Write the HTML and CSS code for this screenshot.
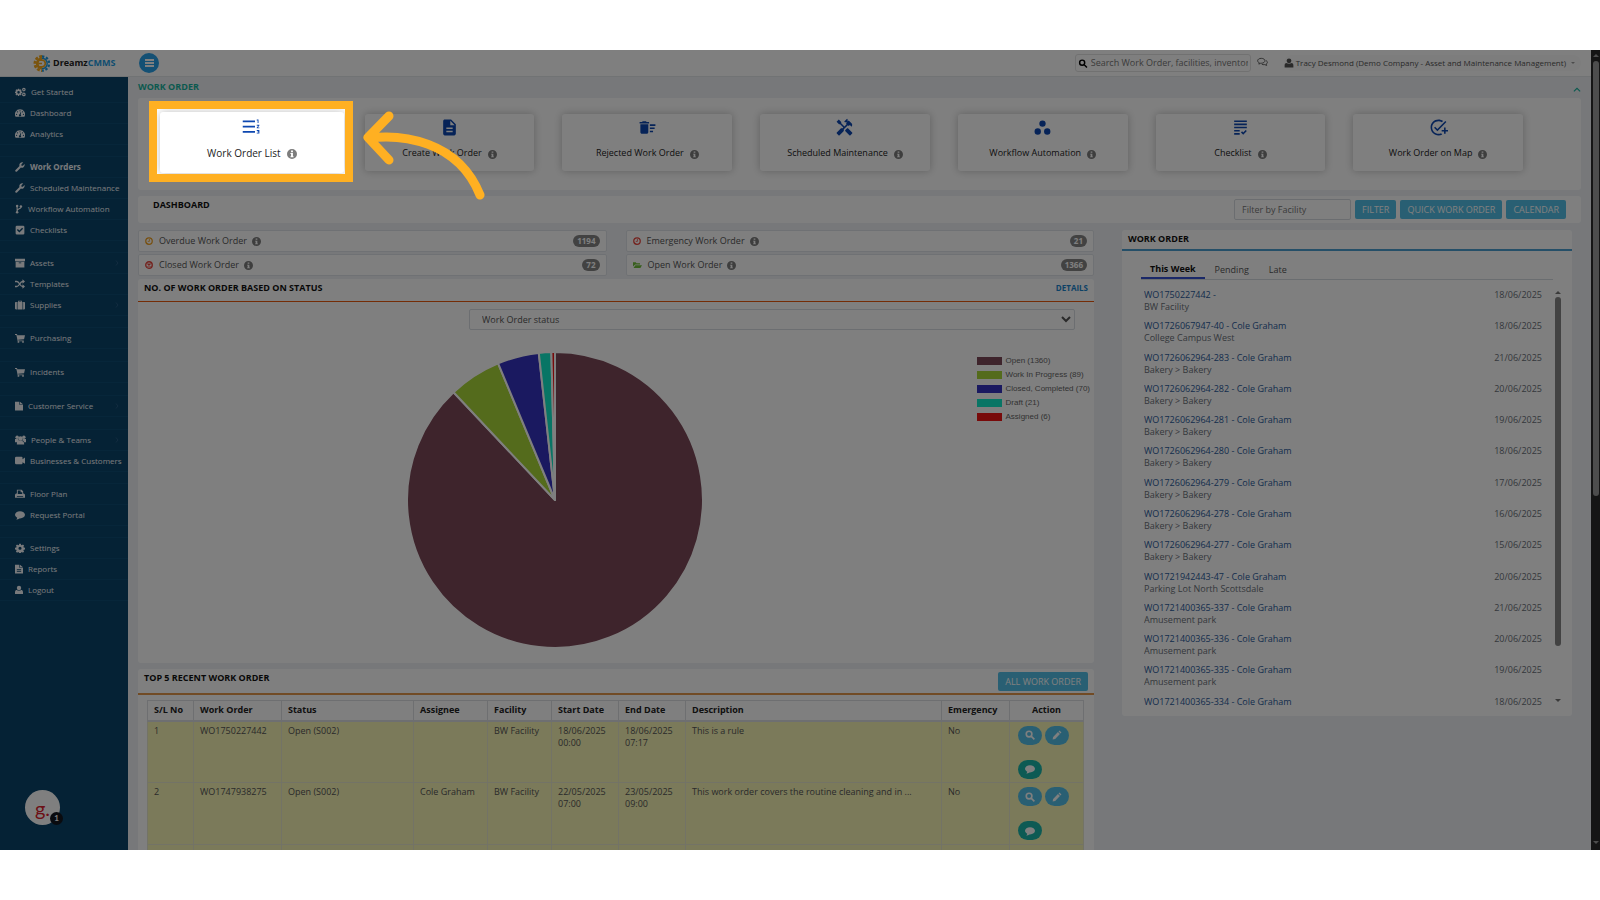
FILE: index.html
```html
<!DOCTYPE html>
<html lang="en">
<head>
    <meta charset="UTF-8">
    <meta name="viewport" content="width=device-width, initial-scale=1.0">
    <title>DreamzCMMS - Work Order</title>
    <link rel="stylesheet" href="styles.css">
</head>
<body>
    <!-- Icon sprite -->
    <svg class="sprite" xmlns="http://www.w3.org/2000/svg">
        <symbol id="i-gear" viewBox="0 0 16 16"><path fill-rule="evenodd" d="M6.7 1h2.6l.4 2 1.3.6 1.7-1.2 1.9 1.9-1.2 1.7.6 1.3 2 .4v2.6l-2 .4-.6 1.3 1.2 1.7-1.9 1.9-1.7-1.2-1.3.6-.4 2H6.7l-.4-2-1.3-.6-1.7 1.2-1.9-1.9 1.2-1.7-.6-1.3-2-.4V7.700l2-.4.6-1.300-1.200-1.700 1.900-1.900L5 3.600 6.300 3zM8 5.800a2.500 2.500 0 1 0 0 5 2.500 2.500 0 0 0 0-5z"/></symbol>
        <symbol id="i-cogs" viewBox="0 0 18 16"><path fill-rule="evenodd" d="M4.800 2.500h2l.3 1.600 1 .4 1.300-.9 1.400 1.400-.9 1.300.4 1 1.600.3v2l-1.600.3-.4 1 .9 1.300-1.400 1.400-1.300-.9-1 .4-.3 1.600h-2l-.3-1.600-1-.4-1.300.9L.8 12.200l.9-1.300-.4-1L0 9.600v-2l1.300-.3.4-1L.8 5l1.400-1.400 1.300.9 1-.4zM5.800 6.500a2.100 2.100 0 1 0 0 4.200 2.100 2.100 0 0 0 0-4.200z"/><path fill-rule="evenodd" d="M14.500 1a3 3 0 1 1 0 6 3 3 0 0 1 0-6zm0 2a1 1 0 1 0 0 2 1 1 0 0 0 0-2zM14.500 9a3 3 0 1 1 0 6 3 3 0 0 1 0-6zm0 2a1 1 0 1 0 0 2 1 1 0 0 0 0-2z"/></symbol>
        <symbol id="i-dash" viewBox="0 0 16 16"><path fill-rule="evenodd" d="M8 2a8 8 0 0 1 7 12H1A8 8 0 0 1 8 2zM8 3.500a1 1 0 1 0 0 2 1 1 0 0 0 0-2zM4 5a1 1 0 1 0 0 2 1 1 0 0 0 0-2zM2.500 9a1 1 0 1 0 0 2 1 1 0 0 0 0-2zm11 0a1 1 0 1 0 0 2 1 1 0 0 0 0-2zM12 5a1 1 0 1 0 0 2 1 1 0 0 0 0-2zM9 6.500L7.700 10a1.700 1.700 0 1 0 1.300.3L10 7z"/></symbol>
        <symbol id="i-wrench" viewBox="0 0 16 16"><path d="M15.500 4.500a4.500 4.500 0 0 1-6 4.300l-6.300 6.300a1.600 1.600 0 0 1-2.300-2.300l6.300-6.300a4.500 4.500 0 0 1 6-5.700L10.300 3.500v2.300h2.300l2.700-2.600c.1.400.2.800.2 1.300z"/></symbol>
        <symbol id="i-fork" viewBox="0 0 12 16"><path fill="none" stroke="currentColor" stroke-width="1.800" d="M3 4v8M9 5c0 3-6 2.500-6 6"/><circle cx="3" cy="3" r="2"/><circle cx="3" cy="13" r="2"/><circle cx="9" cy="4" r="2"/></symbol>
        <symbol id="i-check" viewBox="0 0 16 16"><path fill-rule="evenodd" d="M3 1h10a2 2 0 0 1 2 2v10a2 2 0 0 1-2 2H3a2 2 0 0 1-2-2V3a2 2 0 0 1 2-2zm0 7l4 4 6-6-1.600-1.600L7 8.800 4.600 6.400z"/></symbol>
        <symbol id="i-archive" viewBox="0 0 16 16"><path fill-rule="evenodd" d="M0 1h16v4H0zM1 6h14v9H1zm5 1v1.500h4V7z"/></symbol>
        <symbol id="i-random" viewBox="0 0 16 16"><path fill="none" stroke="currentColor" stroke-width="2.200" d="M0 4h3c4 0 5 8 9 8h1M0 12h3c4 0 5-8 9-8h1"/><path d="M12 .5L16 4l-4 3.500zM12 8.500l4 3.500-4 3.500z"/></symbol>
        <symbol id="i-case" viewBox="0 0 16 16"><path fill-rule="evenodd" d="M5 3V1h6v2h1v12H4V3zm1.300-.8V3h3.400v-.8zM0 4.500C0 3.500.8 3 1.500 3H3v12H1.500C.8 15 0 14.300 0 13.500zM13 3h1.500c.8 0 1.500.7 1.500 1.500v9c0 .8-.7 1.500-1.500 1.500H13z"/></symbol>
        <symbol id="i-cart" viewBox="0 0 16 16"><path d="M0 1.500h3.200l.5 2H16l-1.500 6.300-9.300 1 .3 1H14v1.500H4.300L2.200 3H0z"/><circle cx="5.500" cy="14.200" r="1.500"/><circle cx="12.800" cy="14.200" r="1.500"/></symbol>
        <symbol id="i-file" viewBox="0 0 13 16"><path d="M0 1h7v5h6v9.500H0zM8 1l5 4H8z"/></symbol>
        <symbol id="i-report" viewBox="0 0 13 16"><path fill-rule="evenodd" d="M0 1h7v5h6v9.500H0zM8 1l5 4H8zM3 8v1.300h7V8zm0 3v1.300h7V11z"/></symbol>
        <symbol id="i-users" viewBox="0 0 18 16"><circle cx="3.500" cy="3.500" r="2.800"/><circle cx="14.500" cy="3.500" r="2.800"/><circle cx="9" cy="5.500" r="3.600"/><path d="M0 6.500h5.500c0 2 .5 2 1 2.500L4 11.500H0zM18 6.500h-5.500c0 2-.5 2-1 2.500l2.500 2.500h4zM3 15.500c0-4.500 1-6.500 2.500-6.500h7c1.500 0 2.500 2 2.500 6.500z"/></symbol>
        <symbol id="i-video" viewBox="0 0 16 16"><path d="M2 1h8.500a1.500 1.500 0 0 1 1.500 1.500V5l4-2.500v10L12 10v1.500a1.500 1.500 0 0 1-1.500 1.500H2a2 2 0 0 1-2-2V3a2 2 0 0 1 2-2z"/></symbol>
        <symbol id="i-print" viewBox="0 0 16 16"><path fill-rule="evenodd" d="M3 1h7.500L13 3.500V7c1.500 0 3 .8 3 2.500V14H0V9.500C0 8 1 7 3 7zm1.500 1.500V8h7V5H9V2.500zM3 11v1.500h10V11z"/></symbol>
        <symbol id="i-comment" viewBox="0 0 16 16"><path d="M8 2c4.400 0 8 2.500 8 5.700s-3.600 5.700-8 5.700h-1C5.500 14.600 4 15 2 15.200c1-1 1.300-2 1.500-3C1.300 11.200 0 9.600 0 7.700 0 4.500 3.600 2 8 2z"/></symbol>
        <symbol id="i-comments" viewBox="0 0 18 16"><path fill="none" stroke="currentColor" stroke-width="1.500" d="M7 2c3.500 0 6 1.800 6 4s-2.500 4-6 4H6l-3 1.500.8-2.200C2 8.500 1 7.500 1 6c0-2.200 2.500-4 6-4z"/><path fill="none" stroke="currentColor" stroke-width="1.500" d="M14.500 5.500c1.500.7 2.500 1.800 2.500 3.200 0 1.200-.7 2.200-2 2.800l.8 2.200-3-1.400c-2 .3-3.800 0-5-.7"/></symbol>
        <symbol id="i-user" viewBox="0 0 14 16"><circle cx="7" cy="4.500" r="3.800"/><path d="M0 15V12c0-3 1.500-4 3-4 2 1.700 6 1.700 8 0 1.500 0 3 1 3 4v3z"/></symbol>
        <symbol id="i-search" viewBox="0 0 16 16"><path fill="none" stroke="currentColor" stroke-width="2.600" d="M11 6.500a4.500 4.500 0 1 1-9 0 4.500 4.500 0 0 1 9 0zM9.800 9.800L15 15"/></symbol>
        <symbol id="i-pencil" viewBox="0 0 16 16"><path d="M1 15l.8-4L9.500 3.300l3.200 3.200L5 14.200zM10.500 2.300L12 .9l3.100 3.200-1.400 1.400z"/></symbol>
        <symbol id="i-info" viewBox="0 0 16 16"><path fill-rule="evenodd" d="M8 0a8 8 0 1 1 0 16A8 8 0 0 1 8 0zM6.500 2.500V5h3V2.500zM5.500 6.500V8h1v3.500h-1V13h5v-1.500h-1v-5z"/></symbol>
        <symbol id="i-clock" viewBox="0 0 16 16"><circle cx="8" cy="8" r="6.500" fill="none" stroke="currentColor" stroke-width="2.500"/><path fill="none" stroke="currentColor" stroke-width="1.600" d="M8.800 4v4.800H5.500"/></symbol>
        <symbol id="i-times" viewBox="0 0 16 16"><circle cx="8" cy="8" r="6.500" fill="none" stroke="currentColor" stroke-width="2.800"/><path fill="none" stroke="currentColor" stroke-width="2.600" d="M5 5l6 6M11 5l-6 6"/></symbol>
        <symbol id="i-folder" viewBox="0 0 18 16"><path d="M0 11V2.500h5.500l1.500 2h7V7H4.500zM4.800 8.300H18L14.800 14H1z"/></symbol>
        <symbol id="i-list" viewBox="0 0 24 24"><path d="M18 17h2v.5h-1v1h1v.5h-2v1h3v-4h-3v1zm1-9h1V4h-2v1h1v3zm-1 3h1.800L18 13.100v.9h3v-1h-1.800l1.800-2.100V10h-3v1zM2 5h14v2H2V5zm0 14h14v-2H2v2zm0-6h14v-2H2v2z"/></symbol>
        <symbol id="i-doc" viewBox="0 0 24 24"><path d="M14 2H6c-1.100 0-1.990.9-1.990 2L4 20c0 1.100.89 2 1.990 2H18c1.100 0 2-.9 2-2V8l-6-6zm2 16H8v-2h8v2zm0-4H8v-2h8v2zm-3-5V3.500L18.500 9H13z"/></symbol>
        <symbol id="i-sweep" viewBox="0 0 24 24"><path d="M15 16h4v2h-4zm0-8h7v2h-7zm0 4h6v2h-6zM3 18c0 1.100.9 2 2 2h6c1.100 0 2-.9 2-2V8H3v10zM14 5h-3l-1-1H6L5 5H2v2h12z"/></symbol>
        <symbol id="i-tools" viewBox="0 0 24 24"><path d="M21.670 18.170l-5.300-5.300h-.99l-2.540 2.540v.99l5.300 5.300c.39.39 1.020.39 1.410 0l2.120-2.120c.39-.38.39-1.020 0-1.410z"/><path d="M17.340 10.190l1.410-1.410 2.120 2.120c1.170-1.170 1.170-3.070 0-4.240l-3.540-3.540-1.410 1.410V1.710l-.7-.71-3.540 3.540.71.71h2.830l-1.410 1.410 1.060 1.060-2.890 2.890-4.130-4.130V5.060L4.830 2.040 2 4.870 5.030 7.900h1.410l4.130 4.130-.85.85H7.600l-5.300 5.300c-.39.39-.39 1.020 0 1.410l2.120 2.120c.39.39 1.020.39 1.410 0l5.300-5.300v-2.120l5.150-5.150 1.060 1.050z"/></symbol>
        <symbol id="i-dots" viewBox="0 0 24 24"><circle cx="12" cy="7" r="4"/><circle cx="6" cy="17" r="4"/><circle cx="18" cy="17" r="4"/></symbol>
        <symbol id="i-grading" viewBox="0 0 24 24"><path d="M4 7h16v2H4V7zm0 6h16v-2H4v2zm0 4h7v-2H4v2zm0 4h7v-2H4v2zm11.410-2.830L14 16.750l-1.410 1.410L15.410 21 20 16.420 18.580 15l-3.170 3.170zM4 3v2h16V3H4z"/></symbol>
        <symbol id="i-task" viewBox="0 0 24 24"><path d="M22 5.180L10.590 16.600l-4.240-4.240 1.410-1.410 2.830 2.830 10-10L22 5.180zM12 20c-4.410 0-8-3.590-8-8s3.590-8 8-8c1.570 0 3.040.46 4.280 1.250l1.450-1.450C16.100 2.670 14.130 2 12 2 6.480 2 2 6.480 2 12s4.480 10 10 10c1.730 0 3.360-.44 4.780-1.220l-1.500-1.500c-1 .46-2.110.72-3.280.72zm7-5h-3v2h3v3h2v-3h3v-2h-3v-3h-2v3z"/></symbol>
        <symbol id="i-right" viewBox="0 0 8 12"><path fill="none" stroke="currentColor" stroke-width="1.500" d="M2 1l4 5-4 5"/></symbol>
        <symbol id="i-up" viewBox="0 0 12 8"><path fill="none" stroke="currentColor" stroke-width="1.800" d="M1 7l5-5 5 5"/></symbol>
    </svg>

    <div class="app">
        <!-- Top bar -->
        <header class="topbar">
            <a class="brand" href="#">
                <svg class="brand-gear" viewBox="0 0 18 18">
                    <path fill="none" stroke="#1e9be0" stroke-width="2.500" stroke-dasharray="2.500 1.800" d="M9 1.500a7.500 7.500 0 0 1 0 15"/>
                    <path fill="none" stroke="#1e9be0" stroke-width="1.500" d="M9 3.500a5.500 5.500 0 0 1 0 11"/>
                    <path fill="none" stroke="#f5a81c" stroke-width="3" stroke-dasharray="3 1.500" d="M9 1.500a7.500 7.500 0 0 0 0 15"/>
                    <path fill="none" stroke="#f5a81c" stroke-width="3" d="M9 4a5 5 0 0 0 0 10"/>
                    <path fill="none" stroke="#f5a81c" stroke-width="1.800" d="M6.500 5.500h2.500a3.500 3.500 0 0 1 0 7H6.500M5 9h4"/>
                </svg>
                <span class="brand-name">Dreamz<span class="brand-blue">CMMS</span></span>
            </a>
            <button type="button" class="menu-toggle" aria-label="Toggle menu"><span></span><span></span><span></span></button>
            <div class="topbar-right">
                <label class="search">
                    <svg class="ico"><use href="#i-search"/></svg>
                    <input type="text" aria-label="Search" placeholder="Search Work Order, facilities, inventory">
                </label>
                <a href="#" class="chat-link" aria-label="Messages"><svg class="ico wide"><use href="#i-comments"/></svg></a>
                <button type="button" class="user-menu">
                    <svg class="ico"><use href="#i-user"/></svg>
                    <span>Tracy Desmond (Demo Company - Asset and Maintenance Management)</span>
                    <i class="caret"></i>
                </button>
            </div>
        </header>

        <div class="body">
            <!-- Sidebar -->
            <nav class="sidebar">
                <ul class="nav-group">
                    <li><a href="#"><svg class="ico wide"><use href="#i-cogs"/></svg>Get Started</a></li>
                    <li><a href="#"><svg class="ico"><use href="#i-dash"/></svg>Dashboard</a></li>
                    <li><a href="#"><svg class="ico"><use href="#i-dash"/></svg>Analytics</a></li>
                </ul>
                <ul class="nav-group">
                    <li><a href="#" class="active"><svg class="ico"><use href="#i-wrench"/></svg>Work Orders</a></li>
                    <li><a href="#"><svg class="ico"><use href="#i-wrench"/></svg>Scheduled Maintenance</a></li>
                    <li><a href="#"><svg class="ico slim"><use href="#i-fork"/></svg>Workflow Automation</a></li>
                    <li><a href="#"><svg class="ico"><use href="#i-check"/></svg>Checklists</a></li>
                </ul>
                <ul class="nav-group">
                    <li><a href="#"><svg class="ico"><use href="#i-archive"/></svg>Assets<svg class="more"><use href="#i-right"/></svg></a></li>
                    <li><a href="#"><svg class="ico"><use href="#i-random"/></svg>Templates</a></li>
                    <li><a href="#"><svg class="ico"><use href="#i-case"/></svg>Supplies<svg class="more"><use href="#i-right"/></svg></a></li>
                </ul>
                <ul class="nav-group single">
                    <li><a href="#"><svg class="ico"><use href="#i-cart"/></svg>Purchasing</a></li>
                </ul>
                <ul class="nav-group single">
                    <li><a href="#"><svg class="ico"><use href="#i-cart"/></svg>Incidents</a></li>
                </ul>
                <ul class="nav-group single">
                    <li><a href="#"><svg class="ico slim"><use href="#i-file"/></svg>Customer Service<svg class="more"><use href="#i-right"/></svg></a></li>
                </ul>
                <ul class="nav-group">
                    <li><a href="#"><svg class="ico wide"><use href="#i-users"/></svg>People &amp; Teams<svg class="more"><use href="#i-right"/></svg></a></li>
                    <li><a href="#"><svg class="ico"><use href="#i-video"/></svg>Businesses &amp; Customers</a></li>
                </ul>
                <ul class="nav-group">
                    <li><a href="#"><svg class="ico"><use href="#i-print"/></svg>Floor Plan</a></li>
                    <li><a href="#"><svg class="ico"><use href="#i-comment"/></svg>Request Portal</a></li>
                </ul>
                <ul class="nav-group">
                    <li><a href="#"><svg class="ico"><use href="#i-gear"/></svg>Settings</a></li>
                    <li><a href="#"><svg class="ico slim"><use href="#i-report"/></svg>Reports</a></li>
                    <li><a href="#"><svg class="ico slim"><use href="#i-user"/></svg>Logout</a></li>
                </ul>
                <button type="button" class="help-widget">g.<span class="help-count">1</span></button>
            </nav>

            <main class="content">
                <div class="page-head">
                    <h1>WORK ORDER</h1>
                    <svg class="collapse"><use href="#i-up"/></svg>
                </div>

                <!-- Shortcut cards -->
                <section class="panel shortcuts">
                    <div class="slot">
                        <a href="#" class="card focus">
                            <svg class="card-ico"><use href="#i-list"/></svg>
                            <span class="card-label">Work Order List <svg class="info"><use href="#i-info"/></svg></span>
                            <span class="spotlight"></span>
                            <svg class="pointer" viewBox="0 0 124 92"><path d="M26 5L5 26.500 26 49M6 27C38 23 95 29 117 84"/></svg>
                        </a>
                    </div>
                    <div class="slot"><a href="#" class="card"><svg class="card-ico"><use href="#i-doc"/></svg><span class="card-label">Create Work Order <svg class="info"><use href="#i-info"/></svg></span></a></div>
                    <div class="slot"><a href="#" class="card"><svg class="card-ico"><use href="#i-sweep"/></svg><span class="card-label">Rejected Work Order <svg class="info"><use href="#i-info"/></svg></span></a></div>
                    <div class="slot"><a href="#" class="card"><svg class="card-ico"><use href="#i-tools"/></svg><span class="card-label">Scheduled Maintenance <svg class="info"><use href="#i-info"/></svg></span></a></div>
                    <div class="slot"><a href="#" class="card"><svg class="card-ico"><use href="#i-dots"/></svg><span class="card-label">Workflow Automation <svg class="info"><use href="#i-info"/></svg></span></a></div>
                    <div class="slot"><a href="#" class="card"><svg class="card-ico"><use href="#i-grading"/></svg><span class="card-label">Checklist <svg class="info"><use href="#i-info"/></svg></span></a></div>
                    <div class="slot"><a href="#" class="card"><svg class="card-ico"><use href="#i-task"/></svg><span class="card-label">Work Order on Map <svg class="info"><use href="#i-info"/></svg></span></a></div>
                </section>

                <!-- Dashboard filter bar -->
                <section class="panel filterbar">
                    <h2>DASHBOARD</h2>
                    <form class="filter-form">
                        <input type="text" aria-label="Filter by Facility" placeholder="Filter by Facility">
                        <button type="button" class="btn">FILTER</button>
                        <button type="button" class="btn">QUICK WORK ORDER</button>
                        <button type="button" class="btn">CALENDAR</button>
                    </form>
                </section>

                <div class="columns">
                    <div class="col-left">
                        <div class="stats">
                            <a href="#" class="stat"><svg class="ico amber"><use href="#i-clock"/></svg>Overdue Work Order <svg class="info"><use href="#i-info"/></svg><span class="badge">1194</span></a>
                            <a href="#" class="stat"><svg class="ico red"><use href="#i-clock"/></svg>Emergency Work Order <svg class="info"><use href="#i-info"/></svg><span class="badge">21</span></a>
                            <a href="#" class="stat"><svg class="ico red"><use href="#i-times"/></svg>Closed Work Order <svg class="info"><use href="#i-info"/></svg><span class="badge">72</span></a>
                            <a href="#" class="stat"><svg class="ico wide green"><use href="#i-folder"/></svg>Open Work Order <svg class="info"><use href="#i-info"/></svg><span class="badge">1366</span></a>
                        </div>

                        <!-- Status chart -->
                        <section class="panel chart-panel">
                            <div class="panel-head orange">
                                <h2>NO. OF WORK ORDER BASED ON STATUS</h2>
                                <a href="#" class="details">DETAILS</a>
                            </div>
                            <select class="chart-select" aria-label="Chart type">
                                <option>Work Order status</option>
                            </select>
                            <div class="chart">
                                <svg class="pie" viewBox="0 0 300 300">
                                    <g stroke="#fff" stroke-width="2" stroke-linejoin="round">
                                        <path fill="#7c4858" d="M150 150V3A147 147 0 1 1 49.200 43z"/>
                                        <path fill="#a8d638" d="M150 150L49.200 43A147 147 0 0 1 93.500 14.300z"/>
                                        <path fill="#3432c0" d="M150 150L93.500 14.300A147 147 0 0 1 133.900 3.900z"/>
                                        <path fill="#10eacb" d="M150 150L133.900 3.900A147 147 0 0 1 146.400 3z"/>
                                        <path fill="#f01414" d="M150 150L146.400 3A147 147 0 0 1 150 3z"/>
                                    </g>
                                </svg>
                                <ul class="legend">
                                    <li><i class="sw-open"></i>Open (1360)</li>
                                    <li><i class="sw-progress"></i>Work In Progress (89)</li>
                                    <li><i class="sw-closed"></i>Closed, Completed (70)</li>
                                    <li><i class="sw-draft"></i>Draft (21)</li>
                                    <li><i class="sw-assigned"></i>Assigned (6)</li>
                                </ul>
                            </div>
                        </section>

                        <!-- Recent work orders -->
                        <section class="panel recent">
                            <div class="panel-head amber-line">
                                <h2>TOP 5 RECENT WORK ORDER</h2>
                                <button type="button" class="btn">ALL WORK ORDER</button>
                            </div>
                            <table>
                                <colgroup>
                                    <col class="c-no"><col class="c-wo"><col class="c-status"><col class="c-assignee"><col class="c-facility"><col class="c-date"><col class="c-date"><col class="c-desc"><col class="c-emerg"><col class="c-action">
                                </colgroup>
                                <thead>
                                    <tr><th>S/L No</th><th>Work Order</th><th>Status</th><th>Assignee</th><th>Facility</th><th>Start Date</th><th>End Date</th><th>Description</th><th>Emergency</th><th class="center">Action</th></tr>
                                </thead>
                                <tbody>
                                    <tr>
                                        <td>1</td><td>WO1750227442</td><td>Open (S002)</td><td></td><td>BW Facility</td><td>18/06/2025 00:00</td><td>18/06/2025 07:17</td><td>This is a rule</td><td>No</td>
                                        <td><div class="actions">
                                            <button type="button" aria-label="View"><svg class="ico"><use href="#i-search"/></svg></button>
                                            <button type="button" aria-label="Edit"><svg class="ico"><use href="#i-pencil"/></svg></button>
                                            <button type="button" class="teal" aria-label="Comment"><svg class="ico"><use href="#i-comment"/></svg></button>
                                        </div></td>
                                    </tr>
                                    <tr>
                                        <td>2</td><td>WO1747938275</td><td>Open (S002)</td><td>Cole Graham</td><td>BW Facility</td><td>22/05/2025 07:00</td><td>23/05/2025 09:00</td><td>This work order covers the routine cleaning and in ...</td><td>No</td>
                                        <td><div class="actions">
                                            <button type="button" aria-label="View"><svg class="ico"><use href="#i-search"/></svg></button>
                                            <button type="button" aria-label="Edit"><svg class="ico"><use href="#i-pencil"/></svg></button>
                                            <button type="button" class="teal" aria-label="Comment"><svg class="ico"><use href="#i-comment"/></svg></button>
                                        </div></td>
                                    </tr>
                                    <tr><td></td><td></td><td></td><td></td><td></td><td></td><td></td><td></td><td></td><td></td></tr>
                                </tbody>
                            </table>
                        </section>
                    </div>

                    <!-- Work order list -->
                    <section class="panel col-right">
                        <div class="panel-head blue">
                            <h2>WORK ORDER</h2>
                        </div>
                        <div class="tabs">
                            <button type="button" class="tab on">This Week</button>
                            <button type="button" class="tab">Pending</button>
                            <button type="button" class="tab">Late</button>
                        </div>
                        <div class="list-wrap">
                            <ul class="wo-list">
                                <li><a href="#">WO1750227442 -</a><time>18/06/2025</time><span>BW Facility</span></li>
                                <li><a href="#">WO1726067947-40 - Cole Graham</a><time>18/06/2025</time><span>College Campus West</span></li>
                                <li><a href="#">WO1726062964-283 - Cole Graham</a><time>21/06/2025</time><span>Bakery &gt; Bakery</span></li>
                                <li><a href="#">WO1726062964-282 - Cole Graham</a><time>20/06/2025</time><span>Bakery &gt; Bakery</span></li>
                                <li><a href="#">WO1726062964-281 - Cole Graham</a><time>19/06/2025</time><span>Bakery &gt; Bakery</span></li>
                                <li><a href="#">WO1726062964-280 - Cole Graham</a><time>18/06/2025</time><span>Bakery &gt; Bakery</span></li>
                                <li><a href="#">WO1726062964-279 - Cole Graham</a><time>17/06/2025</time><span>Bakery &gt; Bakery</span></li>
                                <li><a href="#">WO1726062964-278 - Cole Graham</a><time>16/06/2025</time><span>Bakery &gt; Bakery</span></li>
                                <li><a href="#">WO1726062964-277 - Cole Graham</a><time>15/06/2025</time><span>Bakery &gt; Bakery</span></li>
                                <li><a href="#">WO1721942443-47 - Cole Graham</a><time>20/06/2025</time><span>Parking Lot North Scottsdale</span></li>
                                <li><a href="#">WO1721400365-337 - Cole Graham</a><time>21/06/2025</time><span>Amusement park</span></li>
                                <li><a href="#">WO1721400365-336 - Cole Graham</a><time>20/06/2025</time><span>Amusement park</span></li>
                                <li><a href="#">WO1721400365-335 - Cole Graham</a><time>19/06/2025</time><span>Amusement park</span></li>
                                <li><a href="#">WO1721400365-334 - Cole Graham</a><time>18/06/2025</time></li>
                            </ul>
                            <div class="scroll list-scroll"><i class="arrow up"></i><i class="thumb"></i><i class="arrow down"></i></div>
                        </div>
                    </section>
                </div>
            </main>
        </div>
        <div class="scroll page-scroll"><i class="arrow up"></i><i class="thumb"></i><i class="arrow down"></i></div>
    </div>
</body>
</html>
```
FILE: styles.css
```css
* {
    box-sizing: border-box;
}

body {
    margin: 0;
    padding: 50px 0;
    height: 100vh;
    background: #fff;
    font-family: "Open Sans", "Noto Sans", sans-serif;
    font-size: 9px;
    line-height: 12px;
    color: #555;
}

h1, h2, ul {
    margin: 0;
    padding: 0;
    list-style: none;
}

h1, h2 {
    font-size: 9px;
    font-weight: 700;
    color: #111;
}

a {
    color: inherit;
    text-decoration: none;
}

button, input, select {
    font: inherit;
    color: inherit;
}

button {
    border: 0;
    padding: 0;
    cursor: pointer;
}

svg {
    fill: currentColor;
    flex: none;
}

.sprite {
    display: none;
}

.ico {
    width: 10px;
    height: 10px;
}

.ico.wide {
    width: 11px;
}

.ico.slim {
    width: 8px;
}

.info {
    width: 9px;
    height: 9px;
    color: #7d7d7d;
}

/* App frame */
.app {
    position: relative;
    height: 100%;
    overflow: hidden;
    display: grid;
    grid-template-columns: 1fr 9px;
    grid-template-rows: 27px minmax(0, 1fr);
    background: #eef1f5;
}

/* Top bar */
.topbar {
    display: flex;
    align-items: center;
    background: #fff;
    border-bottom: 1px solid #e3e6e9;
    padding-right: 10px;
}

.brand {
    display: flex;
    align-items: center;
    gap: 2px;
    width: 139px;
    padding-left: 33px;
}

.brand-gear {
    width: 18px;
    height: 17px;
}

.brand-name {
    font-size: 9px;
    font-weight: 700;
    color: #222;
}

.brand-blue {
    color: #1e9be0;
}

.menu-toggle {
    display: flex;
    flex-direction: column;
    align-items: center;
    justify-content: center;
    gap: 1px;
    width: 20px;
    height: 20px;
    border-radius: 50%;
    background: #28a0e8;
}

.menu-toggle span {
    width: 9px;
    height: 2px;
    background: #fff;
}

.topbar-right {
    display: flex;
    align-items: center;
    margin-left: auto;
}

.search {
    display: flex;
    align-items: center;
    gap: 3px;
    width: 176px;
    height: 18px;
    padding: 0 2px;
    border: 1px solid #e2e2e2;
    border-radius: 3px;
    color: #000;
}

.search .ico {
    height: 9px;
}

.search input {
    flex: 1;
    min-width: 0;
    padding: 0;
    border: 0;
    outline: 0;
    background: none;
}

::placeholder {
    color: #777;
    opacity: 1;
}

.chat-link {
    margin: 0 16px 0 6px;
    height: 13px;
}

.user-menu {
    display: flex;
    align-items: center;
    gap: 2px;
    height: 16px;
    padding: 0 6px 0 0;
    border-radius: 8px;
    background: #fafafa;
    font-size: 8px;
}

.caret {
    margin-left: 3px;
    border: 2px solid transparent;
    border-top-color: #999;
    border-bottom: 0;
}

/* Scroll bars */
.scroll {
    display: flex;
    flex-direction: column;
    align-items: center;
}

.arrow {
    border: 3px solid transparent;
}

.arrow.up {
    border-top: 0;
    border-bottom-color: currentColor;
}

.arrow.down {
    margin-top: auto;
    border-bottom: 0;
    border-top-color: currentColor;
}

.page-scroll {
    grid-column: 2;
    grid-row: 1 / 3;
    padding: 4px 0 6px;
    background: #2a2a2a;
    color: #9a9a9a;
}

.page-scroll .thumb {
    width: 6px;
    height: 55%;
    margin-top: 4px;
    border-radius: 3px;
    background: #9a9a9a;
}

.list-scroll {
    width: 8px;
    padding: 2px 0 6px;
    color: #777;
}

.list-scroll .thumb {
    width: 6px;
    height: 85%;
    margin-top: 3px;
    border-radius: 3px;
    background: #858585;
}

.body {
    display: grid;
    grid-template-columns: 128px 1fr;
    grid-template-rows: minmax(0, 1fr);
    min-height: 0;
}

/* Sidebar */
.sidebar {
    position: relative;
    padding-top: 5px;
    background: #0a446b;
    font-size: 8px;
    color: #f2f5f8;
}

.nav-group {
    margin-bottom: 12px;
}

.nav-group.single {
    margin-bottom: 13px;
}

.nav-group a {
    display: flex;
    align-items: center;
    gap: 5px;
    height: 21px;
    padding: 0 9px 0 15px;
    border-bottom: 1px solid #0f4c74;
    white-space: nowrap;
}

.nav-group + .nav-group li:first-child a {
    box-shadow: 0 -1px #0f4c74;
}

.nav-group a.active {
    font-weight: 700;
}

.more {
    width: 4px;
    height: 6px;
    margin-left: auto;
    color: #2f6288;
}

.help-widget {
    position: absolute;
    left: 25px;
    bottom: 25px;
    width: 35px;
    height: 35px;
    border-radius: 50%;
    background: #fff;
    font-family: Lato, sans-serif;
    font-size: 20px;
    line-height: 28px;
    color: #d8202c;
}

.help-count {
    position: absolute;
    right: -3px;
    bottom: 0;
    width: 13px;
    height: 13px;
    border-radius: 50%;
    background: #14161f;
    font-size: 8px;
    line-height: 13px;
    font-weight: 700;
    color: #fff;
}

/* Content */
.content {
    min-width: 0;
    padding: 0 10px;
}

.page-head {
    display: flex;
    justify-content: space-between;
    height: 21px;
    padding-top: 4px;
}

.page-head h1 {
    color: #17b39e;
}

.collapse {
    width: 8px;
    height: 5px;
    margin-top: 6px;
    color: #17b39e;
}

.panel {
    background: #fff;
    border-radius: 3px;
}

.shortcuts {
    display: grid;
    grid-template-columns: repeat(7, 1fr);
    height: 92px;
    padding: 16px 44px 0 15px;
}

.slot {
    padding: 0 14px;
}

.card {
    position: relative;
    display: flex;
    flex-direction: column;
    align-items: center;
    justify-content: space-between;
    height: 57px;
    padding: 4px 0 12px;
    border-radius: 3px;
    background: #fff;
    box-shadow: 0 0 8px rgba(0, 0, 0, 0.25);
    font-weight: 500;
    color: #222;
}

.card-ico {
    width: 19px;
    height: 19px;
    color: #0d47b0;
}

.card-label {
    display: flex;
    align-items: center;
    gap: 6px;
    white-space: nowrap;
}

.card-label .info,
.stat .info {
    margin-top: 2px;
}

.card.focus {
    height: 61px;
    margin: -2px -7px;
    padding-bottom: 14px;
    font-size: 10px;
}

.card.focus .card-ico {
    width: 21px;
    height: 21px;
}

.card.focus .info {
    width: 10px;
    height: 10px;
}

/* Dims the whole app except the focused card */
.spotlight {
    position: absolute;
    z-index: 10;
    inset: -11px -9px -9px -11px;
    border: 8px solid #ffb022;
    box-shadow: 0 0 0 3000px rgba(0, 0, 0, 0.5);
}

.pointer {
    position: absolute;
    z-index: 11;
    left: 203px;
    top: -1px;
    width: 124px;
    height: 92px;
    fill: none;
    stroke: #ffb022;
    stroke-width: 9px;
    stroke-linecap: round;
    stroke-linejoin: round;
}

.filterbar {
    display: flex;
    justify-content: space-between;
    height: 27px;
    margin-top: 6px;
    padding: 3px 15px;
}

.filter-form {
    display: flex;
    align-items: center;
    gap: 4px;
}

.filter-form input {
    width: 117px;
    height: 21px;
    padding: 0 7px;
    border: 1px solid #d6dbe0;
    border-radius: 2px;
    background: #fff;
}

.btn {
    height: 19px;
    padding: 0 7px;
    border-radius: 2px;
    background: #53bfe6;
    color: #fff;
    white-space: nowrap;
}

.columns {
    display: grid;
    grid-template-columns: 956fr 450fr;
    align-items: start;
    gap: 28px;
    margin: 7px 9px 0 0;
}

.col-left {
    min-width: 0;
}

.stats {
    display: grid;
    grid-template-columns: 1fr 1fr;
    gap: 2px 19px;
}

.stat {
    display: flex;
    align-items: center;
    gap: 5px;
    height: 22px;
    padding: 0 6px 1px 5px;
    border: 1px solid #dfe3e8;
    border-radius: 2px;
    background: #fff;
}

.stat .ico {
    height: 8px;
}

.amber {
    color: #f0a020;
}

.red {
    color: #e8453c;
}

.green {
    color: #6fbf3b;
}

.badge {
    margin-left: auto;
    padding: 0 4px;
    border-radius: 6px;
    background: #858585;
    font-size: 8px;
    line-height: 12px;
    font-weight: 700;
    color: #fff;
}

.panel-head {
    display: flex;
    justify-content: space-between;
    padding: 3px 6px;
}

.orange {
    height: 23px;
    border-bottom: 1px solid #e8590c;
}

.amber-line {
    height: 26px;
    border-bottom: 2px solid #e2964a;
}

.blue {
    height: 21px;
    border-bottom: 2px solid #4a9fd0;
}

.details {
    font-size: 8px;
    font-weight: 700;
    color: #1b84cc;
}

.chart-panel {
    height: 384px;
    margin-top: 3px;
}

.chart-select {
    display: block;
    width: 606px;
    height: 21px;
    margin: 7px 19px 0 auto;
    padding: 0 4px 0 8px;
    border: 1px solid #d8dde2;
    border-radius: 2px;
    background: #fff;
}

.chart {
    position: relative;
    display: flex;
    justify-content: center;
    margin-top: 19px;
    padding-right: 122px;
}

.pie {
    width: 302px;
    height: 302px;
}

.legend {
    position: absolute;
    right: 4px;
    top: 5px;
    font-family: "Liberation Sans", sans-serif;
    font-size: 8px;
    line-height: 14px;
    color: #666;
}

.legend li {
    display: flex;
    align-items: center;
    gap: 4px;
}

.legend i {
    width: 25px;
    height: 8px;
}

.sw-open { background: #7c4858; }
.sw-progress { background: #a8d638; }
.sw-closed { background: #3432c0; }
.sw-draft { background: #10eacb; }
.sw-assigned { background: #f01414; }

/* Recent work orders table */
.recent {
    margin-top: 6px;
    padding-bottom: 10px;
}

table {
    width: calc(100% - 19px);
    margin: 5px 10px 0 9px;
    table-layout: fixed;
    border-collapse: collapse;
}

th, td {
    padding: 3px 6px;
    border: 1px solid #dcdfe2;
    text-align: left;
    vertical-align: top;
}

th {
    height: 20px;
    border-bottom-width: 2px;
    font-weight: 700;
    color: #222;
    white-space: nowrap;
}

td {
    height: 62px;
    background: #f6f4b4;
    border-color: #e6e6cc;
}

.center {
    text-align: center;
}

.c-no { width: 46px; }
.c-wo { width: 88px; }
.c-status { width: 132px; }
.c-assignee { width: 74px; }
.c-facility { width: 64px; }
.c-date { width: 67px; }
.c-emerg { width: 68px; }
.c-action { width: 74px; }

.actions {
    display: flex;
    flex-wrap: wrap;
    gap: 15px 3px;
    padding: 1px 0 0 2px;
}

.actions button {
    display: flex;
    align-items: center;
    justify-content: center;
    width: 24px;
    height: 19px;
    border-radius: 10px;
    background: #53bfe6;
    color: #fff;
}

.actions .teal {
    background: #1bb5a8;
}

/* Work order list */
.tabs {
    display: flex;
    margin: 10px 19px 0;
    border-bottom: 1px solid #d5dae0;
}

.tab {
    height: 18px;
    padding: 0 10px;
    background: none;
}

.tab.on {
    padding: 0 9px;
    border-bottom: 2px solid #3550d0;
    font-weight: 700;
    color: #111;
}

.list-wrap {
    display: flex;
    height: 419px;
    margin: 9px 10px 8px 22px;
    overflow: hidden;
}

.wo-list {
    flex: 1;
    display: grid;
    grid-auto-rows: 1fr;
    height: 438px;
    margin-right: 12px;
}

.wo-list li {
    display: grid;
    grid-template-columns: 1fr auto;
    grid-auto-rows: 12px;
    color: #6a6f78;
}

.wo-list a {
    color: #2a5a9a;
}
```
